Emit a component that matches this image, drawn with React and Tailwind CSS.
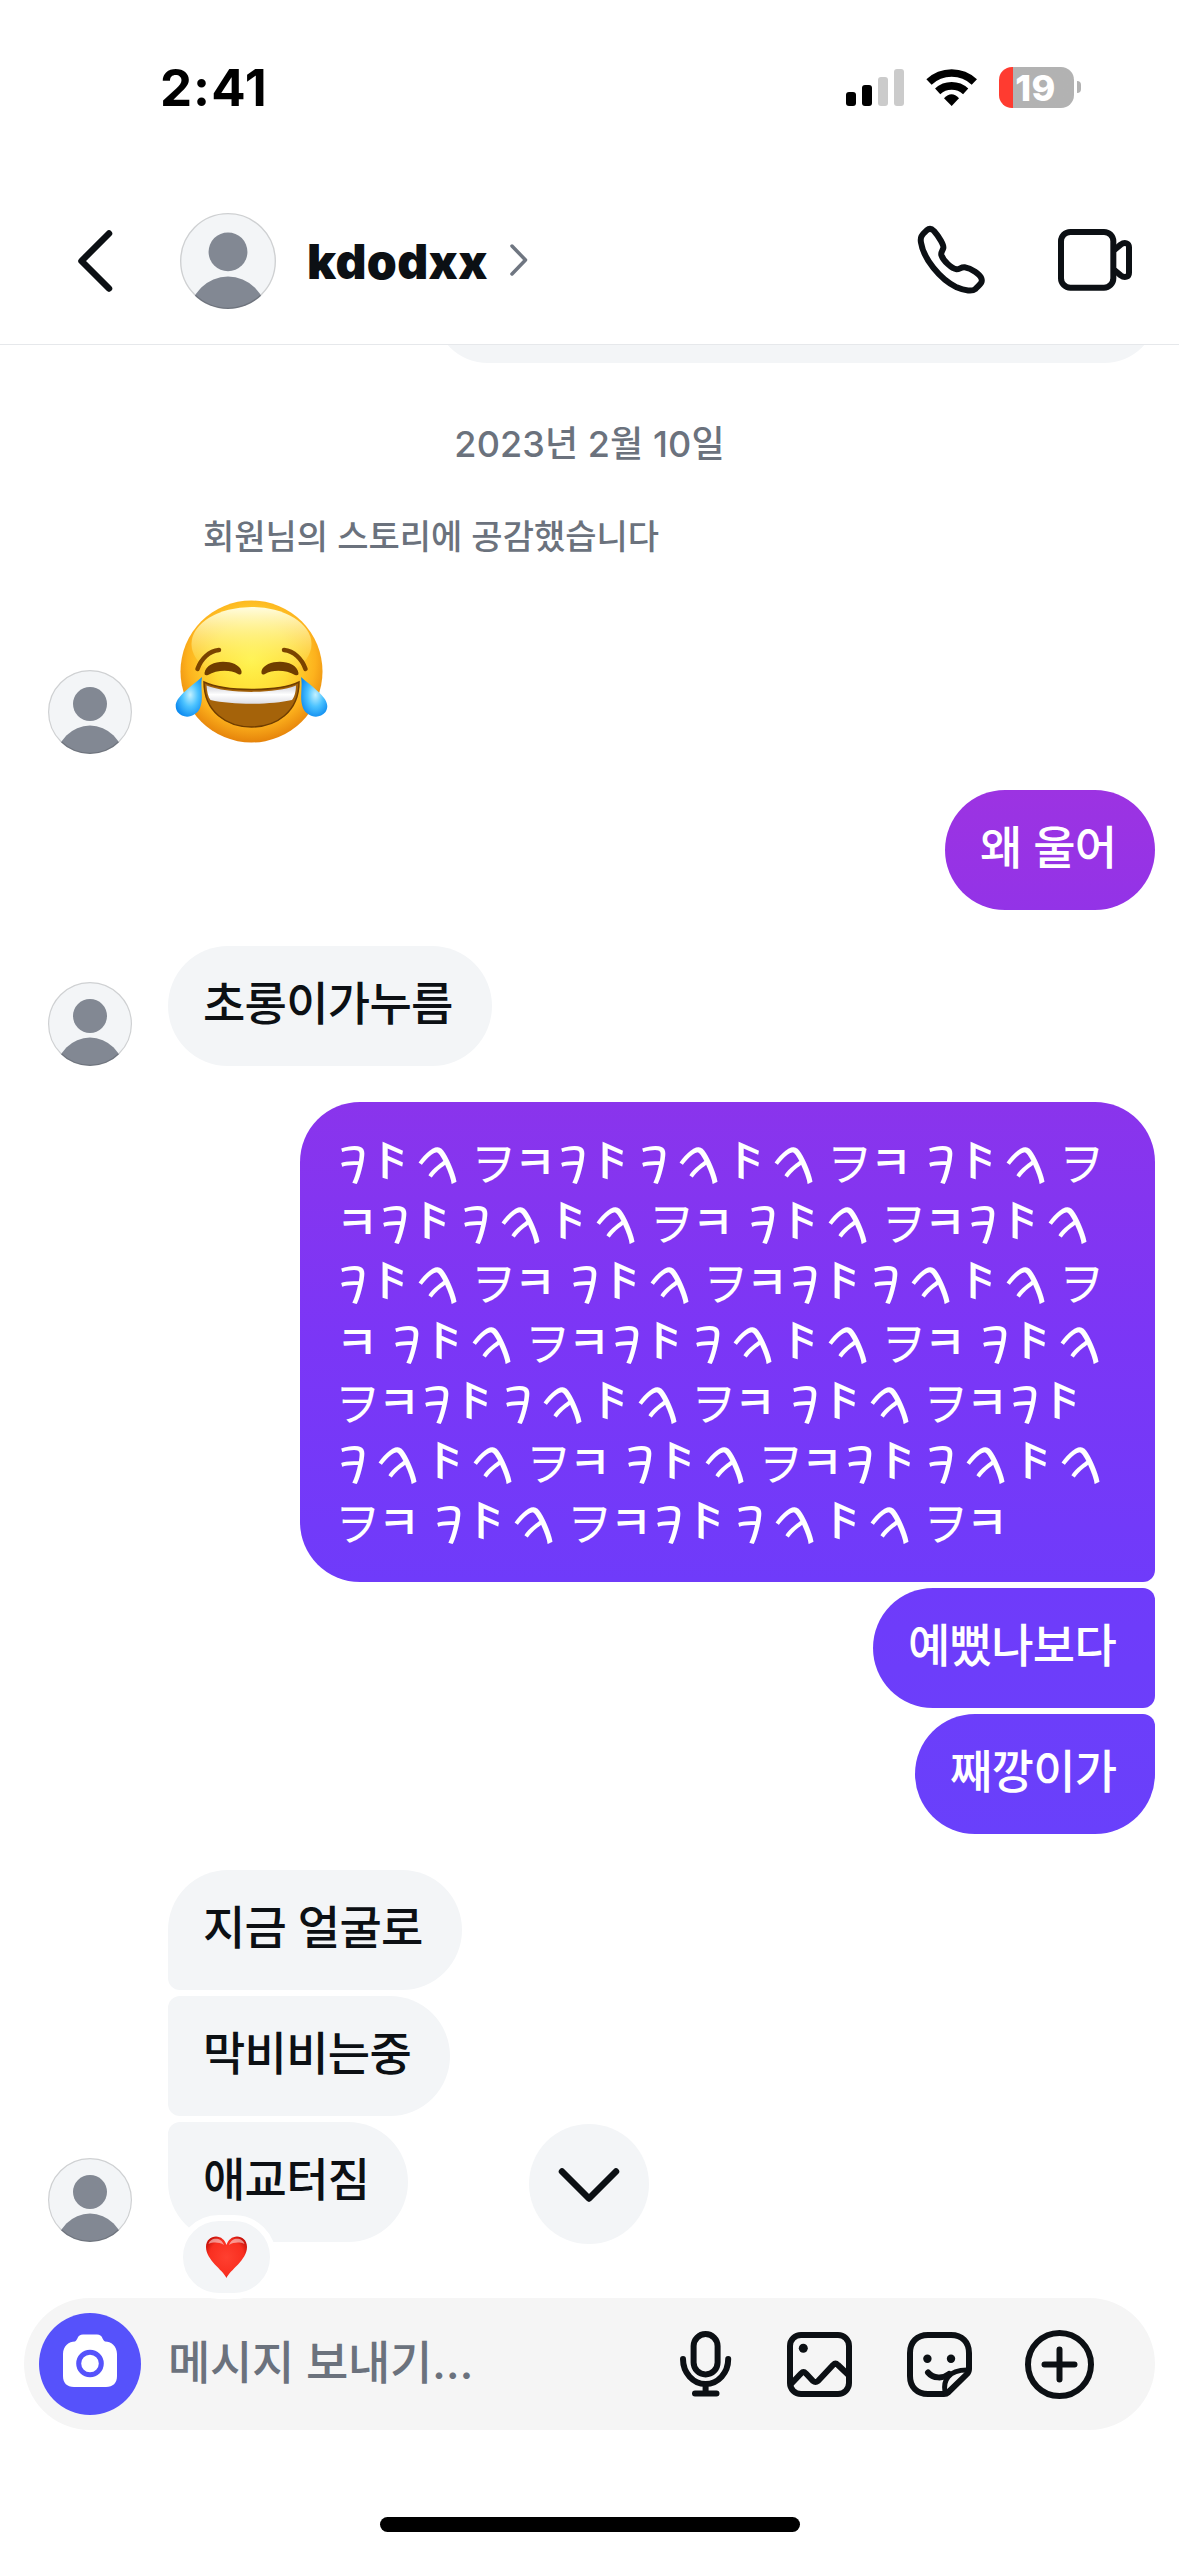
import React from "react";

const laughLines = [
  "ABCDEABACBCDE ABCD",
  "EABACBCDE ABCDEABC",
  "ABCDE ABCDEABACBCD",
  "E ABCDEABACBCDE ABC",
  "DEABACBCDE ABCDEAB",
  "ACBCDE ABCDEABACBC",
  "DE ABCDEABACBCDE",
];

const glyphs = {
  A: { char: "𐨛", box: "w-[41px]", look: "-translate-x-[5px] translate-y-[2px] scale-x-115 scale-y-110" },
  B: { char: "𐌅", box: "w-[40px]", look: "-translate-x-[5px] translate-y-px skew-y-20 scale-x-125 scale-y-105" },
  C: { char: "𐨛", box: "w-[55px]", look: "-translate-x-[5px] translate-y-[6px] -rotate-38 scale-x-135 scale-y-120" },
  D: { char: "ヲ", box: "w-[42px]", look: "translate-y-px font-normal" },
  E: { char: "ㅋ", box: "w-[42px]", look: "" },
};

const LaughText = () => (
  <>
    {laughLines.map((line, i) => (
      <span key={i} className="flex h-[60px] items-center">
        {line.split("").map((c, j) =>
          c === " " ? (
            <span key={j} className="w-3 whitespace-pre"> </span>
          ) : (
            <span key={j} className={`flex justify-center ${glyphs[c].box}`}>
              <span className={`inline-block ${glyphs[c].look}`}>{glyphs[c].char}</span>
            </span>
          )
        )}
      </span>
    ))}
  </>
);

const Avatar = ({ size }) => (
  <svg className={`shrink-0 ${size}`} viewBox="0 0 84 84">
    <clipPath id="avatarClip">
      <circle cx="42" cy="42" r="42" />
    </clipPath>
    <circle cx="42" cy="42" r="42" fill="#f3f5f7" />
    <g clipPath="url(#avatarClip)" fill="#828893">
      <circle cx="42" cy="34" r="17" />
      <circle cx="42" cy="89" r="33.4" />
    </g>
    <circle cx="42" cy="42" r="41.4" fill="none" stroke="#000" strokeOpacity="0.15" strokeWidth="1.2" />
  </svg>
);

const StatusBar = () => (
  <div className="flex h-[176px] shrink-0 items-start pt-[67px]">
    <span className="ml-[160px] w-[110px] text-[51px] font-bold leading-[41px] tracking-[1px] text-black">2:41</span>
    <div className="ml-[576px] mt-0.5 flex h-[37px] items-end gap-1.5">
      <span className="h-3.5 w-2.5 rounded-[3px] bg-black" />
      <span className="h-[21px] w-2.5 rounded-[3px] bg-black" />
      <span className="h-[29px] w-2.5 rounded-[3px] bg-[#cbcbcb]" />
      <span className="h-[37px] w-2.5 rounded-[3px] bg-[#cbcbcb]" />
    </div>
    <svg className="ml-[22px] mt-px h-[39px] w-[52px]" viewBox="438 204 156 117" fill="none" stroke="#000" strokeWidth="23">
      <path d="M447 246A99 99 0 0 1 583 246" />
      <path d="M473 274A62 62 0 0 1 557 274" />
      <path d="M515 318L492 295Q515 270 537 295Z" fill="#000" stroke="none" />
    </svg>
    <div className="ml-[21px] flex h-[41px] w-[75px] items-center justify-center overflow-hidden rounded-[13px] bg-linear-to-r from-[#ff3b30] from-[14px] to-[#b2b2b2] to-[14px] pr-[2px] text-[36px] font-extrabold tracking-[0.5px] text-white">
      19
    </div>
    <span className="ml-[3px] mt-3.5 h-3 w-1 rounded-r-full bg-[#b2b2b2]" />
  </div>
);

const Header = () => (
  <div className="flex h-[169px] shrink-0 items-start border-b border-[#e6e8eb]">
    <svg className="ml-[75px] mt-[52px] h-[66px] w-[40px]" viewBox="0 0 40 66" fill="none" stroke="#0c1014" strokeWidth="6.5" strokeLinecap="round" strokeLinejoin="round">
      <path d="M34 5.5L6.5 33L34 60.5" />
    </svg>
    <div className="ml-[65px] mt-[37px] flex">
      <Avatar size="h-24 w-24" />
    </div>
    <span className="ml-[31px] mt-14 w-[186px] text-[48px] font-black leading-[60px] tracking-[0.4px] text-[#0c1014]">kdodxx</span>
    <svg className="ml-[14px] mt-[66px] h-[36px] w-[24px]" viewBox="0 0 24 36" fill="none" stroke="#6f7681" strokeWidth="3.5" strokeLinecap="round" strokeLinejoin="round">
      <path d="M5 4L18.5 18L5 32" />
    </svg>
    <svg className="ml-[385px] mt-12 h-[72px] w-[70px]" viewBox="408 672 210 216" fill="none" stroke="#0c1014" strokeWidth="18" strokeLinejoin="round">
      <path d="M440 691Q451 682 462 693C478 711 492 736 490 744C488 752 482 756 484 765C490 783 515 806 530 808C540 808 542 801 554 802C575 805 600 824 604 835C608 846 605 848 585 868C578 874 555 873 530 862C480 838 430 775 423 728C420 712 424 706 440 691Z" />
    </svg>
    <svg className="ml-[71px] mt-[52px] h-16 w-[76px]" viewBox="831 684 228 192" fill="none" stroke="#0c1014" strokeWidth="18" strokeLinejoin="round">
      <rect x="843" y="696" width="157" height="167" rx="28" />
      <path d="M1003 750L1022 734C1034 725 1047 729 1047 742V818C1047 831 1034 835 1022 826L1003 810" />
    </svg>
  </div>
);

const JoyFace = () => (
  <svg className="ml-[42px] h-[148px] w-[156px] self-start" viewBox="174 598 156 148">
    <defs>
      <radialGradient id="skin" cx="0.5" cy="0.42" r="0.6">
        <stop offset="0" stopColor="#fff34a" />
        <stop offset="0.45" stopColor="#ffdc35" />
        <stop offset="0.75" stopColor="#fdb21d" />
        <stop offset="1" stopColor="#e27c08" />
      </radialGradient>
      <linearGradient id="shine" x1="0" y1="0" x2="0" y2="1">
        <stop offset="0" stopColor="#fffde0" />
        <stop offset="1" stopColor="#fff04a" stopOpacity="0" />
      </linearGradient>
      <linearGradient id="teeth" x1="0" y1="0" x2="0" y2="1">
        <stop offset="0" stopColor="#cfd0d8" />
        <stop offset="0.5" stopColor="#fff" />
        <stop offset="1" stopColor="#dddde3" />
      </linearGradient>
      <radialGradient id="tear" cx="0.55" cy="0.45" r="0.6">
        <stop offset="0" stopColor="#c4f1ff" />
        <stop offset="0.5" stopColor="#4cc3ff" />
        <stop offset="1" stopColor="#0f8cf0" />
      </radialGradient>
    </defs>
    <circle cx="251.5" cy="671.5" r="71" fill="url(#skin)" />
    <ellipse cx="251.5" cy="644" rx="60" ry="37" fill="url(#shine)" />
    <g fill="none" stroke="#7a4300" strokeLinecap="round">
      <path d="M197.5 669C201 659 209 651 219 650" strokeWidth="4.5" />
      <path d="M305.5 669C302 659 294 651 284 650" strokeWidth="4.5" />
    </g>
    <g fill="#6f3d00">
      <path d="M204.5 673C207 658 238 659 241.5 671Q242 676 238 674C230 669 216 670 208 675Q204 676 204.5 673Z" />
      <path d="M298.5 673C296 658 265 659 261.5 671Q261 676 265 674C273 669 287 670 295 675Q299 676 298.5 673Z" />
    </g>
    <path d="M204 682C225 692 278 692 299 682C299 712 276 727 251.5 727C227 727 204 712 204 682Z" fill="#a5630a" stroke="#6f3d00" strokeWidth="1.5" />
    <path d="M206.5 685.5C228 694 275 694 296 685.5C296 692 294 698 292 700C270 705 233 705 210.5 700C208 697 207 692 206.5 685.5Z" fill="url(#teeth)" />
    <path d="M202 677C200 688 204 698 200 708C196 717 184 720 177.5 712C171 701 183 693 202 677Z" fill="url(#tear)" />
    <path d="M301 677C303 688 299 698 303 708C307 717 319 720 325.5 712C332 701 320 693 301 677Z" fill="url(#tear)" />
  </svg>
);

const Heart = () => (
  <svg className="h-[42px] w-[43px]" viewBox="0 0 43 42">
    <defs>
      <radialGradient id="heartFill" cx="0.5" cy="0.5" r="0.6">
        <stop offset="0" stopColor="#ff4030" />
        <stop offset="0.7" stopColor="#f92f20" />
        <stop offset="1" stopColor="#c40f08" />
      </radialGradient>
    </defs>
    <path d="M21.5 42C18 34 1 24 1 11C1 4 6 0.5 11 0.5C16 0.5 20 4 21.5 9C23 4 27 0.5 32 0.5C37 0.5 42 4 42 11C42 24 25 34 21.5 42Z" fill="url(#heartFill)" />
    <path d="M3.5 8C5 1.5 16 0 19 9C14 6 8 6 3.5 8Z" fill="#fff" opacity="0.5" />
    <path d="M39.5 8C38 1.5 27 0 24 9C29 6 35 6 39.5 8Z" fill="#fff" opacity="0.5" />
  </svg>
);

const Bubble = ({ className = "", children }) => (
  <div className={`h-[120px] whitespace-nowrap pl-[35px] pt-[27px] text-[46px] font-medium leading-[60px] tracking-[-0.7px] ${className}`}>
    {children}
  </div>
);

const Chat = () => (
  <div className="relative flex h-[1953px] shrink-0 flex-col">
    <div className="ml-[434px] h-[18px] w-[724px] overflow-hidden">
      <div className="-mt-[90px] h-[108px] rounded-[54px] bg-[#f3f5f7]" />
    </div>
    <p className="mt-[61px] text-center text-[36px] font-medium leading-10 tracking-[0.1px] text-[#6b727d]">2023년 2월 10일</p>
    <p className="ml-[203px] mt-[53px] text-[34px] font-medium leading-10 text-[#6b727d]">회원님의 스토리에 공감했습니다</p>

    <div className="mt-[41px] flex h-[156px] items-end pl-12">
      <Avatar size="h-[84px] w-[84px]" />
      <JoyFace />
    </div>

    <Bubble className="mr-6 mt-9 w-[210px] self-end rounded-[60px] bg-linear-to-b from-[#9c33e2] to-[#9333e7] text-white">왜 울어</Bubble>

    <div className="mt-9 flex items-end gap-9 pl-12">
      <Avatar size="h-[84px] w-[84px]" />
      <Bubble className="w-[324px] rounded-[60px] bg-[#f3f5f7] text-[#0c1014]">초롱이가누름</Bubble>
    </div>

    <div className="mr-6 mt-9 flex flex-col items-end gap-1.5 text-white">
      <div className="h-[480px] w-[855px] rounded-[60px] rounded-br-xl bg-linear-to-b from-[#8a34ec] via-[#7b36f6] to-[#6f3bfa] pl-9 pt-[30px] text-[46px] font-medium">
        <LaughText />
      </div>
      <Bubble className="w-[282px] rounded-l-[60px] rounded-r-xl bg-linear-to-b from-[#6f3bfa] to-[#6c3efa]">예뻤나보다</Bubble>
      <Bubble className="w-[240px] rounded-[60px] rounded-tr-xl bg-linear-to-b from-[#6c3efa] to-[#6940fb]">째깡이가</Bubble>
    </div>

    <div className="mt-9 flex items-end gap-9 pl-12">
      <Avatar size="h-[84px] w-[84px]" />
      <div className="flex flex-col items-start gap-1.5 text-[#0c1014]">
        <Bubble className="w-[294px] rounded-[60px] rounded-bl-xl bg-[#f3f5f7]">지금 얼굴로</Bubble>
        <Bubble className="w-[282px] rounded-l-xl rounded-r-[60px] bg-[#f3f5f7]">막비비는중</Bubble>
        <Bubble className="relative w-[240px] rounded-[60px] rounded-tl-xl bg-[#f3f5f7]">
          애교터짐
          <span className="absolute left-[9px] top-[93px] flex h-[84px] w-[99px] items-center justify-center rounded-full border-6 border-white bg-[#f3f5f7]">
            <Heart />
          </span>
        </Bubble>
      </div>
    </div>

    <button className="absolute bottom-[54px] left-[529px] flex h-[120px] w-[120px] items-center justify-center rounded-full bg-[#f3f5f7]">
      <svg className="mt-[2px] h-[40px] w-[66px]" viewBox="0 0 66 40" fill="none" stroke="#0c1014" strokeWidth="6.5" strokeLinecap="round" strokeLinejoin="round">
        <path d="M6 6.5L33 33.5L60 6.5" />
      </svg>
    </button>
  </div>
);

const Composer = () => (
  <div className="mx-6 flex h-[132px] shrink-0 items-center rounded-full bg-[#f5f5f5] pl-[15px]">
    <div className="flex h-[102px] w-[102px] items-center justify-center rounded-full bg-[#5652fb]">
      <svg className="mb-[7px] h-[54px] w-[56px]" viewBox="0 0 56 54">
        <path d="M13 7.5C16 6 15 0.5 21 0.5H35C41 0.5 40 6 43 7.5C49 7.5 55 12 55 20V42C55 49 51 53 44 53H12C5 53 1 49 1 42V20C1 12 7 7.5 13 7.5Z" fill="#fff" />
        <circle cx="28" cy="29.5" r="11.3" fill="none" stroke="#5652fb" strokeWidth="5" />
      </svg>
    </div>
    <span className="-mt-1 ml-[27px] w-[512px] text-[46px] font-medium leading-[60px] tracking-[-0.3px] text-[#6b727d]">메시지 보내기...</span>
    <div className="flex items-center text-[#0c1014]">
      <svg className="h-[66px] w-[52px]" viewBox="0 0 52 66" fill="none" stroke="currentColor" strokeWidth="6" strokeLinecap="round">
        <rect x="13.6" y="3" width="24" height="40.5" rx="12" />
        <path d="M3 28A22.6 25 0 0 0 48.2 28M25.6 53V62M15 62.5H36.5" />
      </svg>
      <svg className="ml-[55px] h-[65px] w-[65px]" viewBox="0 0 65 65" fill="none" stroke="currentColor" strokeWidth="6" strokeLinejoin="round">
        <rect x="3" y="3" width="59" height="59" rx="11" />
        <circle cx="16.3" cy="16.3" r="4.5" fill="currentColor" stroke="none" />
        <path d="M4 52L14 41.5Q16.5 39 19 41.5L26 49Q28.5 51 31 49L46 33Q48.5 30.5 51 33L61 42.5" />
      </svg>
      <svg className="ml-[55px] h-[65px] w-[65px]" viewBox="0 0 65 65" fill="none" stroke="currentColor" strokeWidth="6" strokeLinecap="round" strokeLinejoin="round">
        <path d="M37 62H21C10 62 3 55 3 44V21C3 10 10 3 21 3H44C55 3 62 10 62 21V37Q62 40 59.5 42.5L41 60.5Q39.5 62 37 62Z" />
        <path d="M38 60C36 49 41 38 60 38" strokeWidth="5" />
        <path d="M21 40.5C26 46.5 36 47 42 42" />
        <circle cx="20.4" cy="26.7" r="4.2" fill="currentColor" stroke="none" />
        <circle cx="44" cy="26.7" r="4.2" fill="currentColor" stroke="none" />
      </svg>
      <svg className="ml-[53px] h-[69px] w-[69px]" viewBox="0 0 69 69" fill="none" stroke="currentColor" strokeWidth="6" strokeLinecap="round">
        <circle cx="34.5" cy="34.5" r="31.5" />
        <path d="M19.5 34.5H49.5M34.5 19.5V49.5" />
      </svg>
    </div>
  </div>
);

const App = () => {
  return (
    <div className="flex h-[2556px] w-[1179px] flex-col overflow-hidden bg-white font-['Inter','Noto_Sans_CJK_KR',sans-serif]">
      <StatusBar />
      <Header />
      <Chat />
      <Composer />
      <div className="mx-auto mt-[87px] h-[15px] w-[420px] shrink-0 rounded-full bg-black" />
    </div>
  );
};

export default App;
